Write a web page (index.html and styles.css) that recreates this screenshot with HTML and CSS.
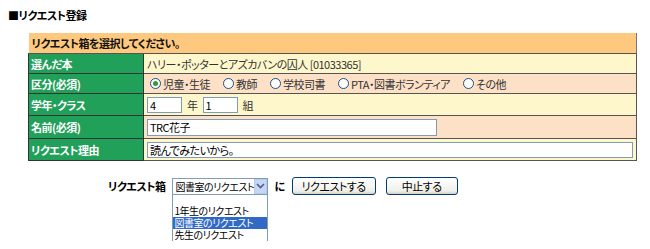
FILE: index.html
```html
<!DOCTYPE html>
<html lang="ja">
<head>
<meta charset="utf-8">
<link rel="stylesheet" href="styles.css">
</head>
<body>
<h1 class="title">■リクエスト登録</h1>
<table class="form">
  <tr><th class="head" colspan="2">リクエスト箱を選択してください。</th></tr>
  <tr class="r1"><td class="lab">選んだ本</td><td class="val yel">ハリー・ポッターとアズカバンの囚人 [01033365]</td></tr>
  <tr class="r1"><td class="lab">区分(必須)</td><td class="val pch">
    <div class="radios">
      <span class="opt"><span class="radio on"></span>児童・生徒</span>
      <span class="opt"><span class="radio"></span>教師</span>
      <span class="opt"><span class="radio"></span>学校司書</span>
      <span class="opt"><span class="radio"></span>PTA・図書ボランティア</span>
      <span class="opt"><span class="radio"></span>その他</span>
    </div>
  </td></tr>
  <tr class="r2"><td class="lab">学年・クラス</td><td class="val yel">
    <div class="grade"><span class="inp small">4</span><span class="unit">年</span><span class="inp small">1</span><span class="unit">組</span></div>
  </td></tr>
  <tr class="r3"><td class="lab">名前(必須)</td><td class="val pch"><span class="inp name">TRC花子</span></td></tr>
  <tr class="r2"><td class="lab">リクエスト理由</td><td class="val yel"><span class="inp reason">読んでみたいから。</span></td></tr>
</table>
<div class="actions">
  <span class="boxlab">リクエスト箱</span>
  <div class="selwrap">
    <div class="select"><span class="seltext">図書室のリクエスト</span><span class="arrow"><svg width="9" height="6" viewBox="0 0 9 6"><path d="M1 1 L4.5 4.5 L8 1" fill="none" stroke="#4d6185" stroke-width="1.6"/></svg></span></div>
    <div class="list">
      <div class="item blank"></div>
      <div class="item">1年生のリクエスト</div>
      <div class="item sel">図書室のリクエスト</div>
      <div class="item">先生のリクエスト</div>
    </div>
  </div>
  <span class="ni">に</span>
  <button class="btn req">リクエストする</button>
  <button class="btn stop">中止する</button>
</div>
</body>
</html>
```
FILE: styles.css
```css
html {
  height: 100%;
}
body {
  margin: 8px;
  min-height: calc(100% - 16px);
  font-family: "Noto Sans CJK JP", "Liberation Sans", sans-serif;
  font-size: 11px;
  letter-spacing: -0.5px;
  font-feature-settings: "palt";
  color: #222;
  background: #fff;
}
.title {
  font-size: 11px;
  font-weight: bold;
  margin: 0 0 11px 0;
  line-height: 14px;
  color: #000;
}
.form {
  margin-left: 20px;
  width: 609px;
  border-collapse: collapse;
  border-right: 1px solid #777;
  border-bottom: 1px solid #777;
}
.form td, .form th {
  padding: 0 0 0 3px;
  line-height: 14px;
}
.head {
  background: #fec97f;
  text-align: left;
  font-weight: bold;
  color: #111;
  height: 20px;
  border-bottom: 1px solid #555;
}
.form tr.r1 td { height: 19px; }
.form tr.r2 td { height: 21px; }
.form tr.r3 td { height: 22px; }
.form td.lab {
  width: 112px;
  background: #21a05a;
  color: #fff;
  font-weight: bold;
  border: 1px solid #333;
  padding-left: 2px;
}
.val {
  border: 1px solid #555;
  color: #333;
}
.yel { background: #fff7cc; }
.pch { background: #fde1c7; }
.radios {
  display: flex;
  align-items: center;
  gap: 13px;
  padding-left: 3px;
}
.opt {
  display: inline-flex;
  align-items: center;
}
.radio {
  width: 9px;
  height: 9px;
  border: 1px solid #1c5180;
  border-radius: 50%;
  background: #fff;
  position: relative;
  margin-right: 2px;
}
.radio.on::after {
  content: "";
  position: absolute;
  left: 2px;
  top: 2px;
  width: 5px;
  height: 5px;
  border-radius: 50%;
  background: #2f9e3a;
}
.grade {
  display: flex;
  align-items: center;
}
.unit {
  margin: 0 5px;
}
.inp {
  display: inline-block;
  box-sizing: border-box;
  height: 16px;
  border: 1px solid #7f9db9;
  background: #fff;
  padding: 0 2px;
  line-height: 14px;
  color: #000;
  vertical-align: middle;
  white-space: nowrap;
}
.inp.small { width: 35px; }
.inp.name { width: 290px; height: 17px; }
.inp.reason { width: 486px; }
.actions {
  display: flex;
  align-items: center;
  margin: 16px 0 0 100px;
  height: 18px;
}
.boxlab {
  font-weight: bold;
  color: #000;
  margin-right: 7px;
}
.selwrap {
  position: relative;
  font-size: 10px;
}
.select {
  box-sizing: border-box;
  width: 96px;
  height: 17px;
  border: 1px solid #7f9db9;
  background: #fff;
  display: flex;
  align-items: center;
  justify-content: space-between;
  padding-left: 2px;
  color: #000;
  white-space: nowrap;
}
.arrow {
  width: 15px;
  height: 15px;
  box-sizing: border-box;
  background: #c6d6f7;
  border: 1px solid #b7c9ee;
  display: flex;
  align-items: center;
  justify-content: center;
}
.list {
  position: absolute;
  z-index: 10;
  left: 0;
  top: 17px;
  width: 96px;
  box-sizing: border-box;
  border: 1px solid #7f9db9;
  border-top: none;
  background: #fff;
  color: #000;
}
.item {
  height: 12px;
  line-height: 12px;
  font-size: 10px;
  padding-left: 1px;
  white-space: nowrap;
}
.item.blank { height: 10px; }
.item.sel {
  background: #316ac5;
  color: #fff;
}
.ni {
  font-weight: bold;
  margin: 0 7px 0 6px;
  color: #000;
}
.btn {
  font-family: inherit;
  font-size: 11px;
  letter-spacing: -0.5px;
  font-feature-settings: "palt";
  height: 18px;
  padding: 0;
  border: 1px solid #003c74;
  border-radius: 3px;
  background: linear-gradient(#ffffff, #f0f0ea 80%, #d6d0c5);
  color: #000;
  line-height: 14px;
}
.btn.req { width: 84px; margin-right: 10px; }
.btn.stop { width: 72px; }
```
